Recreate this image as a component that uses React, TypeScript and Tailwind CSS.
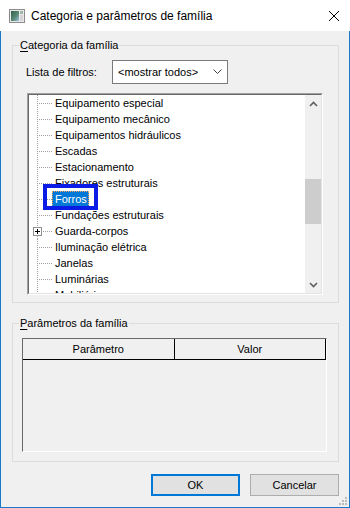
import React from "react";

const rows: { label: string; selected?: boolean; plus?: boolean }[] = [
  { label: "Equipamento especial" },
  { label: "Equipamento mecânico" },
  { label: "Equipamentos hidráulicos" },
  { label: "Escadas" },
  { label: "Estacionamento" },
  { label: "Fixadores estruturais" },
  { label: "Forros", selected: true },
  { label: "Fundações estruturais" },
  { label: "Guarda-corpos", plus: true },
  { label: "Iluminação elétrica" },
  { label: "Janelas" },
  { label: "Luminárias" },
  { label: "Mobiliário" },
];

function TreeRow({ label, selected, plus }: { label: string; selected?: boolean; plus?: boolean }) {
  return (
    <div className="flex h-[16px] shrink-0 items-stretch">
      <svg width="23" height="16" className="shrink-0" shapeRendering="crispEdges">
        {plus ? (
          <>
            <line x1="8.5" y1="0" x2="8.5" y2="4" stroke="#a0a0a0" strokeDasharray="1 1" />
            <line x1="8.5" y1="13" x2="8.5" y2="16" stroke="#a0a0a0" strokeDasharray="1 1" />
            <rect x="4.5" y="4.5" width="8" height="8" fill="#ffffff" stroke="#919191" />
            <line x1="6" y1="8.5" x2="11" y2="8.5" stroke="#000000" />
            <line x1="8.5" y1="6" x2="8.5" y2="11" stroke="#000000" />
            <line x1="14" y1="8.5" x2="23" y2="8.5" stroke="#a0a0a0" strokeDasharray="1 1" />
          </>
        ) : (
          <>
            <line x1="8.5" y1="0" x2="8.5" y2="16" stroke="#a0a0a0" strokeDasharray="1 1" />
            <line x1="10" y1="8.5" x2="23" y2="8.5" stroke="#a0a0a0" strokeDasharray="1 1" />
          </>
        )}
      </svg>
      <span
        className={
          selected
            ? "whitespace-nowrap pl-[3px] pr-[2px] leading-[16px] bg-[#0078d7] text-white outline-1 outline-dotted outline-[#f3a35a] -outline-offset-1"
            : "whitespace-nowrap pl-[3px] pr-[2px] leading-[16px] text-black"
        }
      >
        {label}
      </span>
    </div>
  );
}

function Chevron({ up }: { up?: boolean }) {
  return (
    <svg width="9" height="6" viewBox="0 0 9 6">
      {up ? (
        <polyline points="1,5 4.5,1.5 8,5" fill="none" stroke="#606060" strokeWidth="1.6" />
      ) : (
        <polyline points="1,1 4.5,4.5 8,1" fill="none" stroke="#606060" strokeWidth="1.6" />
      )}
    </svg>
  );
}

export default function App() {
  return (
    <div className="w-[350px] h-[508px] flex flex-col font-['Liberation_Sans',Arial,sans-serif] text-[11px] text-black select-none">
      {/* Title bar */}
      <div className="h-[31px] shrink-0 bg-white flex items-center pl-[9px] pr-[10px]">
        <svg width="16" height="14" viewBox="0 0 16 14" className="shrink-0" shapeRendering="crispEdges">
          <defs>
            <linearGradient id="ig" x1="0" y1="0" x2="1" y2="1">
              <stop offset="0" stopColor="#2f5f4a" />
              <stop offset="0.6" stopColor="#5e8c7a" />
              <stop offset="1" stopColor="#9cc3e6" />
            </linearGradient>
          </defs>
          <rect x="0.5" y="0.5" width="15" height="13" fill="#e9e9e9" stroke="#8c8c8c" />
          <rect x="2" y="2" width="8" height="10" fill="url(#ig)" />
          <rect x="11" y="2" width="3" height="3" fill="#9fb9a8" />
          <rect x="11" y="6" width="3" height="6" fill="#d4d4d4" />
        </svg>
        <span className="ml-[6px] text-[12px] leading-[16px] whitespace-nowrap">Categoria e parâmetros de família</span>
        <div className="flex-1" />
        <svg width="12" height="12" viewBox="0 0 12 12" className="mr-[0px]">
          <line x1="1" y1="1" x2="11" y2="11" stroke="#000" strokeWidth="1" />
          <line x1="11" y1="1" x2="1" y2="11" stroke="#000" strokeWidth="1" />
        </svg>
      </div>

      {/* Client area */}
      <div className="relative flex-1 flex flex-col bg-[#f0f0f0] border-l border-r border-b border-[#1979ca]">
        {/* Group 1 */}
        <fieldset className="ml-[11px] mr-[10px] mt-[7px] border border-[#dcdcdc] p-0">
          <legend className="ml-[6px] px-[1px] h-[14px] leading-[14px]">
            <span className="underline underline-offset-2">C</span>ategoria da família
          </legend>
          <div className="pt-[8px] pb-[7px] pl-[13px] flex flex-col">
            <div className="flex items-center h-[24px]">
              <span className="w-[86px] shrink-0">Lista de filtros:</span>
              <div className="w-[116px] h-[24px] border border-[#7a7a7a] bg-white flex items-center pl-[5px] pr-[5px]">
                <span className="flex-1 whitespace-nowrap">&lt;mostrar todos&gt;</span>
                <svg width="9" height="6" viewBox="0 0 9 6">
                  <polyline points="0.5,0.5 4.5,4.5 8.5,0.5" fill="none" stroke="#404040" strokeWidth="1" />
                </svg>
              </div>
            </div>

            <div className="relative mt-[9px] ml-[1px] w-[296px] h-[202px] border-t border-l border-[#a0a0a0] border-r-white border-b-white border-r border-b">
              <div className="w-full h-full border-t border-l border-[#696969] border-r border-b border-r-[#e3e3e3] border-b-[#e3e3e3] bg-white flex overflow-hidden">
                <div className="flex-1 flex flex-col overflow-hidden">
                  {rows.map((r) => (
                    <TreeRow key={r.label} label={r.label} selected={r.selected} plus={r.plus} />
                  ))}
                </div>
                <div className="w-[16px] shrink-0 bg-[#f0f0f0] flex flex-col">
                  <div className="h-[17px] shrink-0 flex items-center justify-center">
                    <Chevron up />
                  </div>
                  <div className="h-[67px] shrink-0" />
                  <div className="h-[45px] shrink-0 bg-[#cdcdcd]" />
                  <div className="flex-1" />
                  <div className="h-[17px] shrink-0 flex items-center justify-center">
                    <Chevron />
                  </div>
                </div>
              </div>
              {/* annotation highlight */}
              <div className="absolute left-[15px] top-[90px] w-[55px] h-[26px] border-4 border-[#0a1be6]" />
            </div>
          </div>
        </fieldset>

        {/* Group 2 */}
        <fieldset className="ml-[11px] mr-[10px] mt-[13px] border border-[#dcdcdc] p-0">
          <legend className="ml-[6px] px-[1px] h-[14px] leading-[14px]">
            <span className="underline underline-offset-2">P</span>arâmetros da família
          </legend>
          <div className="pt-[8px] pb-[9px] pl-[9px]">
            <div className="w-[305px] h-[114px] border-t border-l border-[#696969] border-r border-b border-r-white border-b-white bg-[#f0f0f0] flex flex-col">
              <div className="h-[21px] flex border-b border-black">
                <div className="flex-1 border-r border-black flex items-center justify-center">Parâmetro</div>
                <div className="flex-1 border-r border-black flex items-center justify-center">Valor</div>
              </div>
            </div>
          </div>
        </fieldset>

        {/* Buttons */}
        <div className="mt-[12px] pr-[10px] flex justify-end gap-[10px]">
          <button className="w-[89px] h-[22px] border-2 border-[#0078d7] bg-[#e1e1e1] flex items-center justify-center text-[11px]">
            OK
          </button>
          <button className="w-[89px] h-[22px] border border-[#adadad] bg-[#e1e1e1] flex items-center justify-center text-[11px]">
            Cancelar
          </button>
        </div>

        {/* resize grip */}
        <svg width="9" height="9" viewBox="0 0 9 9" className="absolute right-[1px] bottom-[1px]" shapeRendering="crispEdges">
          <rect x="6" y="0" width="2" height="2" fill="#bcbcbc" />
          <rect x="3" y="3" width="2" height="2" fill="#bcbcbc" />
          <rect x="6" y="3" width="2" height="2" fill="#bcbcbc" />
          <rect x="0" y="6" width="2" height="2" fill="#bcbcbc" />
          <rect x="3" y="6" width="2" height="2" fill="#bcbcbc" />
          <rect x="6" y="6" width="2" height="2" fill="#bcbcbc" />
        </svg>
      </div>
    </div>
  );
}
